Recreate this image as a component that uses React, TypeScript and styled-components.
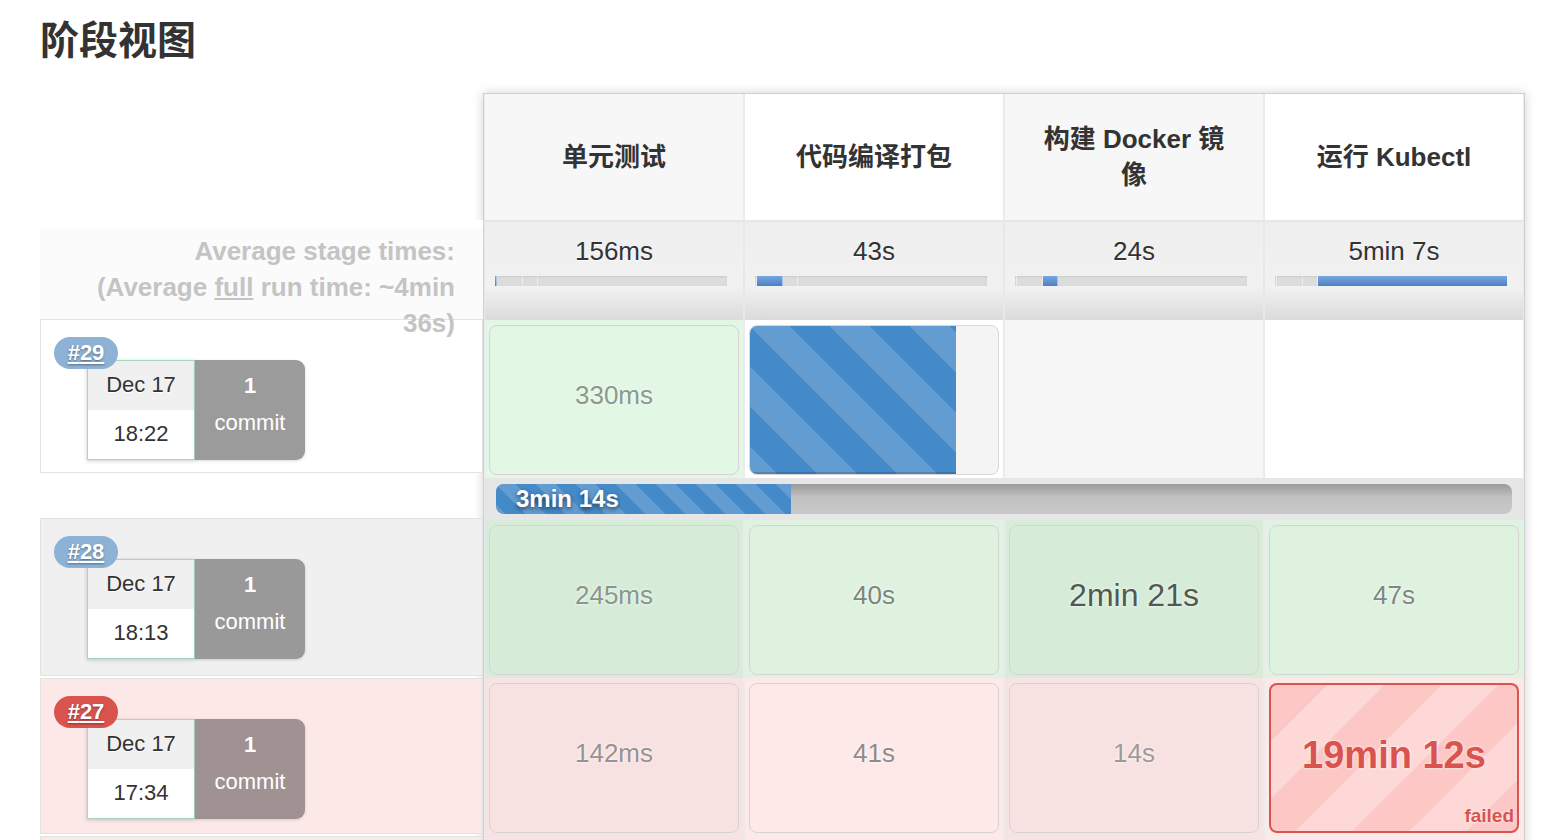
import React from "react";
import styled, { createGlobalStyle } from "styled-components";

const GlobalStyle = createGlobalStyle`
  * { box-sizing: border-box; }
  body {
    margin: 0;
    background: #fff;
    color: #333;
    font-family: "Liberation Sans", "Noto Sans CJK SC", sans-serif;
  }
`;

const Page = styled.div`
  padding: 18px 0 0 40px;
`;

const Title = styled.h2`
  margin: 0 0 29px 0;
  font-size: 39px;
  line-height: 46px;
  font-weight: bold;
  color: #333;
`;

const Board = styled.div`
  display: flex;
  align-items: flex-start;
`;

// left column: labels + build badges
const LeftCol = styled.div`
  width: 443px;
  display: flex;
  flex-direction: column;
`;

const Spacer = styled.div<{ $h: number }>`
  height: ${(p) => p.$h}px;
`;

const AvgLabel = styled.div`
  position: relative;
  z-index: 2;
  height: 99px;
  padding: 13px 28px 0 0;
  text-align: right;
  font-size: 26px;
  line-height: 36px;
  font-weight: bold;
  color: #c4c4c4;
  background: linear-gradient(#fff 8px, #fbfbfb 9px);

  u {
    text-decoration: underline;
  }
`;

const RunRow = styled.div<{ $bg: string; $h: number }>`
  position: relative;
  display: flex;
  height: ${(p) => p.$h}px;
  margin-bottom: 2px;
  padding: 40px 0 0 46px;
  border: 1px solid #e2e2e2;
  background: ${(p) => p.$bg};
`;

const Badge = styled.a<{ $bg: string }>`
  position: absolute;
  left: 13px;
  top: 17px;
  z-index: 1;
  width: 64px;
  height: 32px;
  border-radius: 16px;
  background: ${(p) => p.$bg};
  color: #fff;
  font-size: 22px;
  font-weight: bold;
  line-height: 32px;
  text-align: center;
  text-decoration: underline;
  text-shadow: 0 1px 2px rgba(0, 0, 0, 0.4);
`;

const DateBox = styled.div`
  width: 108px;
  height: 100px;
  display: flex;
  flex-direction: column;
  border: 1px solid #a9d4c0;
  background: #fff;
  box-shadow: 0 1px 4px rgba(0, 0, 0, 0.2);
`;

const DatePart = styled.div<{ $top?: boolean }>`
  flex: 1;
  display: flex;
  align-items: center;
  justify-content: center;
  padding-bottom: 2px;
  font-size: 22px;
  color: #333;
  background: ${(p) => (p.$top ? "#f0f0f0" : "#fff")};
  text-shadow: 0 1px 0 #fff;
`;

const CommitBox = styled.div<{ $bg: string }>`
  width: 110px;
  height: 100px;
  display: flex;
  flex-direction: column;
  align-items: center;
  padding-top: 7px;
  border-radius: 0 9px 9px 0;
  background: ${(p) => p.$bg};
  color: #fff;
  font-size: 22px;
  line-height: 37px;
  box-shadow: 0 1px 3px rgba(0, 0, 0, 0.15);

  b {
    font-weight: bold;
  }
`;

// right side: the stage table
const Table = styled.div`
  width: 1042px;
  border: 1px solid #d0d0d0;
  background: #fff;
  box-shadow: 0 0 10px rgba(0, 0, 0, 0.18);
`;

const Row = styled.div<{ $h: number }>`
  display: grid;
  grid-template-columns: repeat(4, 260px);
  height: ${(p) => p.$h}px;
`;

const HeadCell = styled.div<{ $alt: boolean }>`
  display: flex;
  align-items: center;
  justify-content: center;
  padding: 0 30px;
  border-left: 1px solid #ebebeb;
  border-right: 1px solid #ebebeb;
  background: ${(p) => (p.$alt ? "#f7f7f7" : "#fff")};
  text-align: center;
  font-size: 26px;
  font-weight: bold;
  line-height: 36px;
  color: #333;
`;

const AvgCell = styled.div`
  padding-top: 14px;
  border-left: 1px solid #e8e8e8;
  border-right: 1px solid #e8e8e8;
  background: linear-gradient(to bottom, #e2e2e2 0, #efefef 3px, #f1f1f1 68%, #dadada 100%);
  text-align: center;
  font-size: 26px;
  line-height: 34px;
  color: #333;
  text-shadow: 0 1px 1px #fff;
`;

const MiniBar = styled.div`
  display: flex;
  width: 232px;
  height: 10px;
  margin: 8px 0 0 10px;
  background: #dcdcdc;
  box-shadow: inset 0 1px 2px rgba(0, 0, 0, 0.08);
`;

const MiniSeg = styled.div<{ $on: boolean }>`
  height: 100%;
  border-right: 1px solid rgba(255, 255, 255, 0.45);
  background: ${(p) => (p.$on ? "linear-gradient(#78a6e0, #4c7fc4)" : "transparent")};

  &:last-child {
    border-right: none;
  }
`;

const StageCell = styled.div<{ $bg: string }>`
  padding: 5px 4px 3px;
  border-left: 1px solid #ebebeb;
  border-right: 1px solid #ebebeb;
  background: ${(p) => p.$bg};
`;

const StageBox = styled.div<{ $bg: string; $fg: string; $size: number }>`
  height: 100%;
  display: flex;
  align-items: center;
  justify-content: center;
  padding-bottom: 9px;
  border: 1px solid #d4d4d4;
  border-radius: 8px;
  background: ${(p) => p.$bg};
  color: ${(p) => p.$fg};
  font-size: ${(p) => p.$size}px;
  text-shadow: 0 0 3px #fff;
`;

const stripes = (angle: number, size: number, tint: string) => `
  background-image: linear-gradient(
    ${angle}deg,
    ${tint} 25%,
    transparent 25%,
    transparent 50%,
    ${tint} 50%,
    ${tint} 75%,
    transparent 75%,
    transparent
  );
  background-size: ${size}px ${size}px;
`;

const RunningBox = styled.div`
  height: 100%;
  overflow: hidden;
  border: 1px solid #d8d8d8;
  border-radius: 8px;
  background: #f4f4f4;
`;

const RunningFill = styled.div`
  height: 100%;
  background-color: #4489c8;
  ${stripes(45, 80, "rgba(255,255,255,0.16)")}
  box-shadow: inset 0 -2px 0 rgba(0, 0, 0, 0.15);
`;

const FailedBox = styled.div`
  position: relative;
  height: 100%;
  display: flex;
  align-items: center;
  justify-content: center;
  padding-bottom: 6px;
  border: 2px solid #d9534f;
  border-radius: 8px;
  background-color: #fdc7c5;
  ${stripes(-45, 114, "rgba(255,255,255,0.3)")}
  color: #d9534f;
  font-size: 38px;
  font-weight: bold;
  text-shadow: 0 0 3px #fff;
`;

const FailedTag = styled.span`
  position: absolute;
  right: 3px;
  bottom: 5px;
  font-size: 19px;
  line-height: 20px;
`;

const ProgressRow = styled.div`
  height: 42px;
  padding: 6px 12px;
  background: #e6e6e6;
`;

const ProgressBar = styled.div`
  height: 30px;
  overflow: hidden;
  border-radius: 8px;
  background: linear-gradient(#9a9a9a, #c2c2c2 45%, #c8c8c8);
`;

const ProgressFill = styled.div`
  height: 100%;
  display: flex;
  align-items: center;
  padding-left: 20px;
  background-color: #4489c8;
  ${stripes(45, 40, "rgba(255,255,255,0.16)")}
  color: #fff;
  font-size: 24px;
  font-weight: bold;
  white-space: nowrap;
  text-shadow: 0 2px 4px rgba(0, 0, 0, 0.6);
`;

const stages = ["单元测试", "代码编译打包", "构建 Docker 镜像", "运行 Kubectl"];
const averages = ["156ms", "43s", "24s", "5min 7s"];
const segments = [2, 26, 15, 189];

type Cell = { text: string; bg: string; box: string; fg: string; size?: number };

const greenRow: Cell[] = [
  { text: "245ms", bg: "#d8ecda", box: "#d6ecd8", fg: "#8a968b" },
  { text: "40s", bg: "#e0f2e1", box: "#dff2e0", fg: "#7b867c" },
  { text: "2min 21s", bg: "#d8ecda", box: "#d6ecd8", fg: "#515951", size: 32 },
  { text: "47s", bg: "#e0f2e1", box: "#dff2e0", fg: "#7d887e" },
];

const redRow: Cell[] = [
  { text: "142ms", bg: "#f7e3e3", box: "#f7e2e1", fg: "#9a9292" },
  { text: "41s", bg: "#fde9e8", box: "#fde9e8", fg: "#918a8a" },
  { text: "14s", bg: "#f7e3e3", box: "#f7e2e1", fg: "#a19999" },
];

const LeftRun: React.FC<{
  num: number;
  badge: string;
  bg: string;
  commit: string;
  time: string;
  h: number;
}> = ({ num, badge, bg, commit, time, h }) => (
  <RunRow $bg={bg} $h={h}>
    <Badge $bg={badge}>#{num}</Badge>
    <DateBox>
      <DatePart $top>Dec 17</DatePart>
      <DatePart>{time}</DatePart>
    </DateBox>
    <CommitBox $bg={commit}>
      <b>1</b>
      <span>commit</span>
    </CommitBox>
  </RunRow>
);

export default function App() {
  return (
    <Page>
      <GlobalStyle />
      <Title>阶段视图</Title>
      <Board>
        <LeftCol>
          <Spacer $h={127} />
          <AvgLabel>
            Average stage times:
            <br />
            (Average <u>full</u> run time: ~4min
            <br />
            36s)
          </AvgLabel>
          <LeftRun num={29} badge="#8db2d6" bg="#fff" commit="#9b9b9b" time="18:22" h={154} />
          <Spacer $h={43} />
          <LeftRun num={28} badge="#8db2d6" bg="#f0f0f0" commit="#999" time="18:13" h={158} />
          <LeftRun num={27} badge="#d9534f" bg="#fde8e8" commit="#a09292" time="17:34" h={156} />
          {/* next run, only its top edge shows in the frame */}
          <RunRow $bg="#fde8e8" $h={156} />
        </LeftCol>

        <Table>
          <Row $h={126}>
            {stages.map((s, i) => (
              <HeadCell key={s} $alt={i % 2 === 0}>
                {s}
              </HeadCell>
            ))}
          </Row>

          <Row $h={100}>
            {averages.map((a, i) => (
              <AvgCell key={a}>
                {a}
                <MiniBar>
                  {segments.map((w, j) => (
                    <MiniSeg key={j} $on={i === j} style={{ width: w }} />
                  ))}
                </MiniBar>
              </AvgCell>
            ))}
          </Row>

          <Row $h={158}>
            <StageCell $bg="#e4f6e6">
              <StageBox $bg="#e2f7e4" $fg="#8c998d" $size={26}>
                330ms
              </StageBox>
            </StageCell>
            <StageCell $bg="#fff">
              <RunningBox>
                <RunningFill style={{ width: "83%" }} />
              </RunningBox>
            </StageCell>
            <StageCell $bg="#f6f6f6" />
            <StageCell $bg="#fff" />
          </Row>

          <ProgressRow>
            <ProgressBar>
              <ProgressFill style={{ width: "29%" }}>3min 14s</ProgressFill>
            </ProgressBar>
          </ProgressRow>

          <Row $h={158}>
            {greenRow.map((c) => (
              <StageCell key={c.text} $bg={c.bg}>
                <StageBox $bg={c.box} $fg={c.fg} $size={c.size ?? 26}>
                  {c.text}
                </StageBox>
              </StageCell>
            ))}
          </Row>

          <Row $h={158}>
            {redRow.map((c) => (
              <StageCell key={c.text} $bg={c.bg}>
                <StageBox $bg={c.box} $fg={c.fg} $size={26}>
                  {c.text}
                </StageBox>
              </StageCell>
            ))}
            <StageCell $bg="#fde9e8">
              <FailedBox>
                19min 12s
                <FailedTag>failed</FailedTag>
              </FailedBox>
            </StageCell>
          </Row>

          <Row $h={158}>
            {redRow.map((c) => (
              <StageCell key={c.text} $bg={c.bg}>
                <StageBox $bg={c.box} $fg={c.fg} $size={26} />
              </StageCell>
            ))}
            <StageCell $bg="#fde9e8">
              <StageBox $bg="#fde9e8" $fg="#918a8a" $size={26} />
            </StageCell>
          </Row>
        </Table>
      </Board>
    </Page>
  );
}
